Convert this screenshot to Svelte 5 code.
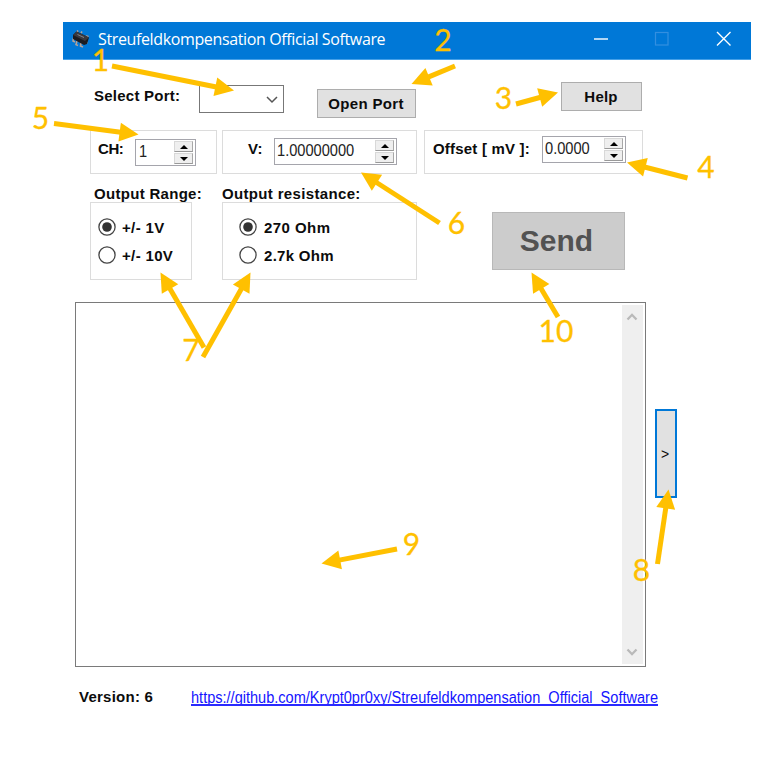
<script>
  const notes = [
    { n: '1', x: 100.5, y: 71, arrows: [[112, 66, 234, 90.5]] },
    { n: '2', x: 443, y: 51, arrows: [[455, 66, 411.5, 84]] },
    { n: '3', x: 503.5, y: 109, arrows: [[516, 104, 558, 92.5]] },
    { n: '4', x: 706, y: 178, arrows: [[687.5, 178, 627, 162.5]] },
    { n: '5', x: 40.5, y: 129, arrows: [[54, 123.5, 138.5, 134.5]] },
    { n: '6', x: 456.5, y: 234, arrows: [[439.5, 223, 361, 172.5]] },
    { n: '7', x: 191, y: 361, arrows: [[204, 347.5, 160.5, 272.5], [203, 357, 250.5, 272.5]] },
    { n: '8', x: 641.5, y: 581, arrows: [[657.5, 564, 668.5, 489.5]] },
    { n: '9', x: 411.5, y: 555, arrows: [[397, 549, 321.5, 563.5]] },
    { n: '10', x: 556, y: 342, arrows: [[558, 317, 531.5, 272.5]] },
  ];

  const HEAD = 19;
  const WING = 9.5;

  function arrow([x1, y1, x2, y2]) {
    const len = Math.hypot(x2 - x1, y2 - y1);
    const ux = (x2 - x1) / len;
    const uy = (y2 - y1) / len;
    const bx = x2 - ux * HEAD;
    const by = y2 - uy * HEAD;
    return {
      shaft: `M${x1} ${y1}L${bx + ux} ${by + uy}`,
      head: `${x2},${y2} ${bx - uy * WING},${by + ux * WING} ${bx + uy * WING},${by - ux * WING}`,
    };
  }

  let range = $state('1');
  let resistance = $state('270');
</script>

{#snippet spinner(value, cls)}
  <div class="spin {cls}">
    <span class="val">{value}</span>
    <span class="steps">
      <span class="step"><svg width="8" height="4"><path d="M0 4L4 0L8 4Z" /></svg></span>
      <span class="step"><svg width="8" height="4"><path d="M0 0L4 4L8 0Z" /></svg></span>
    </span>
  </div>
{/snippet}

{#snippet radio(label, checked, pick)}
  <button class="radio" onclick={pick}>
    <svg width="18" height="18" viewBox="0 0 18 18">
      <circle cx="9" cy="9" r="8.1" fill="#fff" stroke="#444" stroke-width="1.3" />
      {#if checked}<circle cx="9" cy="9" r="4.8" fill="#333" />{/if}
    </svg>
    <span>{label}</span>
  </button>
{/snippet}

<div class="screen">
  <div class="window">
    <header>
      <svg class="chip" width="18" height="18" viewBox="0 0 18 18">
        <path d="M1.500 8l-.5 3 2 1M5 11l-1 3.500 2 1M9 13l-.5 3 2.500 1M5 2l1-1.500M9 3l1-1.500M14 6l2.500 .5M13 12l2.500 1" fill="none" stroke="#b5a298" stroke-width="1.6" />
        <path d="M1 5L4.500 1.500L17 7.500L15 14L12 15L1 9Z" fill="#1b1b20" />
        <path d="M1 5L4.500 1.500L17 7.500L13 11Z" fill="#38383e" />
        <path d="M5.500 4.500l6.500 3" stroke="#85858a" stroke-width="1" />
      </svg>
      <span class="title">Streufeldkompensation Official Software</span>
      <svg class="ctl" width="140" height="16" viewBox="0 0 140 16">
        <path d="M0 8H14" stroke="#fff" stroke-width="1.4" />
        <rect x="61.500" y="1.500" width="12.500" height="12.500" fill="none" stroke="#338fe0" stroke-width="1.2" />
        <path d="M123 1L136.500 14.500M136.500 1L123 14.500" stroke="#fff" stroke-width="1.4" />
      </svg>
    </header>

    <div class="row ports">
      <span class="label sel">Select Port:</span>
      <div class="combo">
        <svg width="12" height="8" viewBox="0 0 12 8"><path d="M1 1L6 6L11 1" fill="none" stroke="#555" stroke-width="1.5" /></svg>
      </div>
      <button class="btn open">Open Port</button>
      <button class="btn help">Help</button>
    </div>

    <div class="row values">
      <div class="group ch"><span class="label">CH:</span>{@render spinner('1', 's-ch')}</div>
      <div class="group volt"><span class="label">V:</span>{@render spinner('1.00000000', 's-v')}</div>
      <div class="group offset"><span class="label">Offset [ mV ]:</span>{@render spinner('0.0000', 's-o')}</div>
    </div>

    <div class="row options">
      <section class="range">
        <span class="label">Output Range:</span>
        <div class="group stack">
          {@render radio('+/- 1V', range === '1', () => (range = '1'))}
          {@render radio('+/- 10V', range === '10', () => (range = '10'))}
        </div>
      </section>
      <section class="resist">
        <span class="label">Output resistance:</span>
        <div class="group stack">
          {@render radio('270 Ohm', resistance === '270', () => (resistance = '270'))}
          {@render radio('2.7k Ohm', resistance === '2.7k', () => (resistance = '2.7k'))}
        </div>
      </section>
      <button class="btn send">Send</button>
    </div>

    <div class="row console">
      <div class="log">
        <div class="track">
          <svg width="12" height="9" viewBox="0 0 12 9"><path d="M1.500 7.500L6 2.800L10.500 7.500" fill="none" stroke="#b9b9b9" stroke-width="2.300" /></svg>
          <svg width="12" height="9" viewBox="0 0 12 9"><path d="M1.500 1.500L6 6.200L10.500 1.500" fill="none" stroke="#b9b9b9" stroke-width="2.300" /></svg>
        </div>
      </div>
      <button class="expand">&gt;</button>
    </div>

    <footer>
      <span class="label ver">Version: 6</span>
      <span class="link"><span>https://github.com/Krypt0pr0xy/Streufeldkompensation_Official_Software</span></span>
    </footer>
  </div>

  <svg class="notes" width="769" height="763" viewBox="0 0 769 763">
    {#each notes as note}
      <text x={note.x} y={note.y}>{note.n}</text>
      {#each note.arrows as a}
        {@const shape = arrow(a)}
        <path d={shape.shaft} />
        <polygon points={shape.head} />
      {/each}
    {/each}
  </svg>
</div>

<style>
  :global(body) { margin: 0; background: #fff; }
  .screen {
    position: relative;
    width: 769px;
    height: 763px;
    box-sizing: border-box;
    padding: 22px 18px 0 63px;
    overflow: hidden;
    font: bold 15px/18px "Liberation Sans", Arial, sans-serif;
    color: #0c0c0c;
  }
  .screen * { box-sizing: border-box; }
  button { font: inherit; color: inherit; margin: 0; padding: 0; }
  svg { display: block; flex: none; }
  .window { width: 688px; }
  header {
    display: flex;
    align-items: center;
    height: 38px;
    padding: 0 17px 3px 9px;
    background: #0078d7;
    border-bottom: 1px solid #45a0e8;
  }
  .title {
    margin-left: 8px;
    font: 16px/22px "Open Sans", "Noto Sans", sans-serif;
    letter-spacing: -0.37px;
    color: #fff;
    white-space: nowrap;
  }
  .ctl { margin-left: auto; }
  .row { display: flex; align-items: flex-start; }
  .label { letter-spacing: 0.25px; white-space: nowrap; }
  .ports { height: 70px; padding: 22px 0 0 31px; }
  .sel { width: 105px; padding-top: 5px; }
  .combo {
    display: flex;
    justify-content: flex-end;
    align-items: center;
    width: 85px;
    height: 28px;
    margin-top: 3px;
    padding: 2px 5px 0 0;
    border: 1px solid #777;
  }
  .btn {
    background: #e1e1e1;
    border: 1px solid #adadad;
    letter-spacing: 0.35px;
  }
  .open { width: 99px; height: 29px; margin: 7px 0 0 33px; padding-right: 1px; }
  .help { width: 81px; height: 29px; margin-left: 145px; padding-right: 1px; letter-spacing: 0.2px; }
  .values { padding-left: 27px; }
  .group { border: 1px solid #dcdcdc; }
  .values .group { display: flex; align-items: flex-start; height: 44px; }
  .values .label { padding-top: 9px; }
  .ch { width: 127px; padding-left: 7px; margin-right: 5px; }
  .ch .label { letter-spacing: -0.4px; width: 37px; }
  .volt { width: 195px; padding-left: 25px; margin-right: 7px; }
  .volt .label { width: 26px; }
  .offset { width: 219px; padding-left: 8px; }
  .offset .label { width: 109px; letter-spacing: 0.2px; }
  .spin {
    display: flex;
    justify-content: space-between;
    height: 27px;
    padding: 1px 2px 1px 3px;
    background: #fff;
    border: 1px solid #a5a5ac;
  }
  .s-ch { width: 61px; margin-top: 8px; }
  .s-v { width: 123px; margin-top: 7px; padding-left: 2px; }
  .s-o { width: 84px; margin-top: 5px; padding-left: 2px; }
  .val {
    width: 20px;
    font-weight: normal;
    font-size: 17px;
    line-height: 21px;
    color: #222;
    transform: scaleX(0.86);
    transform-origin: left;
  }
  .steps { display: flex; flex-direction: column; width: 19px; gap: 1px; }
  .step {
    display: flex;
    flex: 1;
    align-items: center;
    justify-content: center;
    background: #efefef;
    border: 1px solid #d8d8d8;
    border-right-color: #a8a8a8;
    border-bottom-color: #999;
  }
  .step path { fill: #000; }
  .options { height: 116px; padding: 11px 0 0 27px; }
  section { display: flex; flex-direction: column; }
  section .label { height: 17px; }
  .range { width: 132px; }
  .range .label { padding-left: 4px; letter-spacing: 0.3px; }
  .resist .label { letter-spacing: 0.34px; }
  .stack { display: flex; flex-direction: column; gap: 10px; height: 78px; padding: 15px 0 0 7px; }
  .range .stack { width: 102px; }
  .resist { width: 195px; }
  .resist .stack { padding-left: 16px; }
  .radio {
    display: flex;
    align-items: center;
    gap: 6px;
    height: 18px;
    border: 0;
    background: none;
    letter-spacing: 0.35px;
    white-space: nowrap;
  }
  .radio span { padding-top: 2px; }
  .resist .radio { gap: 7px; letter-spacing: 0.45px; }
  .resist .radio:last-child { letter-spacing: 0.3px; }
  .send {
    width: 133px;
    height: 58px;
    margin: 27px 0 0 75px;
    padding-right: 4px;
    background: #ccc;
    border-color: #b8b8b8;
    color: #525252;
    font-size: 30px;
    letter-spacing: 0;
  }
  .console { padding: 12px 0 0 12px; }
  .log {
    display: flex;
    justify-content: flex-end;
    width: 571px;
    height: 365px;
    padding: 2px;
    border: 1px solid #7a7a7a;
  }
  .track {
    display: flex;
    flex-direction: column;
    justify-content: space-between;
    align-items: center;
    width: 21px;
    padding: 7px 2px 7px 0;
    background: #efefef;
  }
  .expand {
    width: 22px;
    height: 89px;
    margin: 107px 0 0 9px;
    padding-right: 2px;
    background: #e1e1e1;
    border: 2px solid #0078d7;
    font-weight: normal;
    font-size: 14px;
  }
  footer { display: flex; align-items: flex-start; padding: 21px 0 0 16px; }
  .ver { width: 112px; }
  .link {
    width: 467px;
    height: 18px;
    overflow: hidden;
    border-bottom: 2px solid #2a2aff;
    color: #1414ff;
    font-weight: normal;
    font-size: 16px;
    line-height: 20px;
  }
  .link span { display: inline-block; white-space: nowrap; transform: scaleX(0.909); transform-origin: left; }
  .notes { position: absolute; left: 0; top: 0; pointer-events: none; }
  .notes text { font: 30px Lato, sans-serif; fill: #ffc000; stroke: #ffc000; stroke-width: 0.3px; text-anchor: middle; }
  .notes path { stroke: #ffc000; stroke-width: 5; }
  .notes polygon { fill: #ffc000; }
</style>
